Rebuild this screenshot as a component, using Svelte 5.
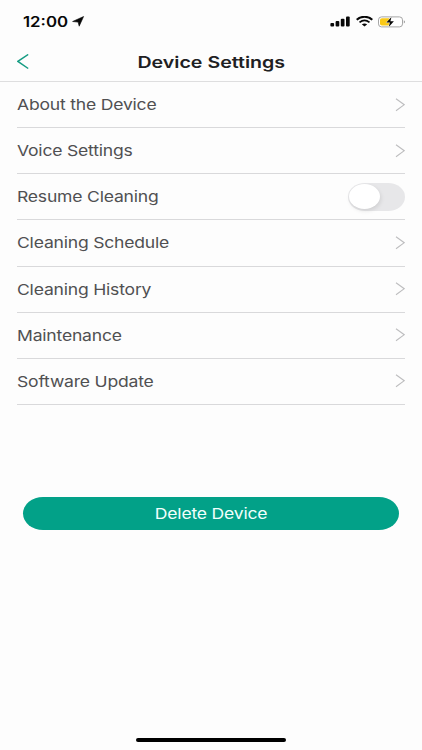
<script>
  const items = [
    { label: 'About the Device' },
    { label: 'Voice Settings' },
    { label: 'Resume Cleaning', toggle: true },
    { label: 'Cleaning Schedule' },
    { label: 'Cleaning History' },
    { label: 'Maintenance' },
    { label: 'Software Update' }
  ];
  let resume = $state(false);
</script>

<div class="screen">
  <div class="status">
    <span class="time wide">12:00</span>
    <svg class="location" width="13" height="11" viewBox="0 0 13 11"><path d="M11.6.5 7.2 10.2 6.1 6.1.6 5.5Z" fill="#080808" stroke="#080808" stroke-width=".6" stroke-linejoin="round" /></svg>
    <div class="indicators">
      <svg width="20" height="11" viewBox="0 0 20 11" fill="#080808">
        <rect x="0.4" y="6.9" width="3.7" height="3.6" rx="1" />
        <rect x="5.6" y="5" width="3.7" height="5.5" rx="1" />
        <rect x="10.8" y="2.8" width="3.7" height="7.7" rx="1" />
        <rect x="16" y=".4" width="3.7" height="10.1" rx="1" />
      </svg>
      <svg class="wifi" width="17" height="11" viewBox="0 0 17 11" fill="none" stroke="#080808">
        <path d="M.7 3.7C5-.2 12-.2 16.3 3.7" stroke-width="2" />
        <path d="M3.5 6.4c3-2.4 7-2.4 10 0" stroke-width="1.8" />
        <path d="m8.5 10.5-2.7-2.3q2.7-1.5 5.4 0Z" fill="#080808" stroke="none" />
      </svg>
      <svg class="battery" width="28" height="12" viewBox="0 0 28 12">
        <rect x=".5" y=".9" width="24" height="10" rx="3" fill="#fff" stroke="#a5a5a5" />
        <path d="M4 2.3h7.5v7.3H4Q2 9.6 2 7.8V4.1Q2 2.3 4 2.3Z" fill="#fac917" />
        <path d="M25.8 4.3q2.4 1.6 0 3.3Z" fill="#999" />
        <path d="m13.5 1-5.2 5.6h3.6L10.7 11l5.2-5.7h-3.5Z" fill="#080808" stroke="#fff" stroke-width=".8" paint-order="stroke" />
      </svg>
    </div>
  </div>

  <header>
    <button class="back" aria-label="Back">
      <svg width="13" height="16" viewBox="0 0 13 16"><path d="M11.2.5.9 7.4l10.3 7.1" fill="none" stroke="#159c83" stroke-width="1.5" /></svg>
    </button>
    <h1><span class="wide">Device Settings</span></h1>
  </header>

  <ul>
    {#each items as item}
      <li>
        <span class="label wide">{item.label}</span>
        {#if item.toggle}
          <button class="switch" class:on={resume} role="switch" aria-checked={resume} aria-label={item.label} onclick={() => (resume = !resume)}>
            <span class="knob"></span>
          </button>
        {:else}
          <svg class="chevron" width="10" height="14" viewBox="0 0 10 14"><path d="M1 .7 9.3 6.7 1 12.8" fill="none" stroke="#bdbdbf" stroke-width="1.1" /></svg>
        {/if}
      </li>
    {/each}
  </ul>

  <button class="delete"><span class="wide">Delete Device</span></button>
  <div class="home"></div>
</div>

<style>
  :global(body) { margin: 0; background: #fdfdfd; }
  .screen {
    width: 422px; height: 750px; box-sizing: border-box; overflow: hidden;
    display: flex; flex-direction: column;
    background: #fdfdfd; color: #505052;
    font-family: Inter, "Liberation Sans", sans-serif;
  }
  button { border: 0; padding: 0; font: inherit; color: inherit; background: none; }
  .wide { display: inline-block; white-space: nowrap; transform: scaleX(1.17); }
  .status { height: 42px; display: flex; align-items: center; padding: 1px 16px 0 23px; box-sizing: border-box; }
  .time { width: 49px; font-size: 14px; font-weight: 600; color: #080808; transform: scaleX(1.2); transform-origin: left; }
  .location { display: block; }
  .indicators { display: flex; align-items: center; margin-left: auto; }
  .wifi { margin-left: 6px; }
  .battery { margin-left: 5px; }
  header { height: 40px; box-sizing: border-box; display: flex; align-items: center; padding-left: 17px; border-bottom: 1px solid #dededf; }
  .back { width: 13px; height: 16px; display: flex; }
  h1 { flex: 1; margin: 0 30px 0 0; text-align: center; font-size: 16px; line-height: 20px; font-weight: 600; color: #202022; }
  h1 .wide { transform: scaleX(1.225); }
  ul { list-style: none; margin: 0; padding: 0 17px; }
  li { height: 46.15px; box-sizing: border-box; display: flex; align-items: center; justify-content: space-between; border-bottom: 1px solid #d9d9db; }
  .label { padding-top: 1px; font-size: 15px; letter-spacing: -.17px; line-height: 20px; transform-origin: left; }
  .switch { width: 57px; height: 28px; border-radius: 17px / 14px; background: #e7e7e9; display: flex; align-items: center; padding: 0 1px; }
  .switch.on { background: #02a188; justify-content: flex-end; }
  .knob { width: 31px; height: 25px; border-radius: 50%; background: #fff; box-shadow: 1px 2px 4px rgba(0, 0, 0, .1); }
  .delete { width: 376px; height: 33px; margin: 92px 0 0 23px; border-radius: 20px / 16.5px; background: #02a188; color: #f1fffc; font-size: 15px; letter-spacing: -.17px; line-height: 33px; flex-shrink: 0; }
  .home { width: 150px; height: 4px; margin: auto auto 8px 136px; border-radius: 2px; background: #000; }
</style>
